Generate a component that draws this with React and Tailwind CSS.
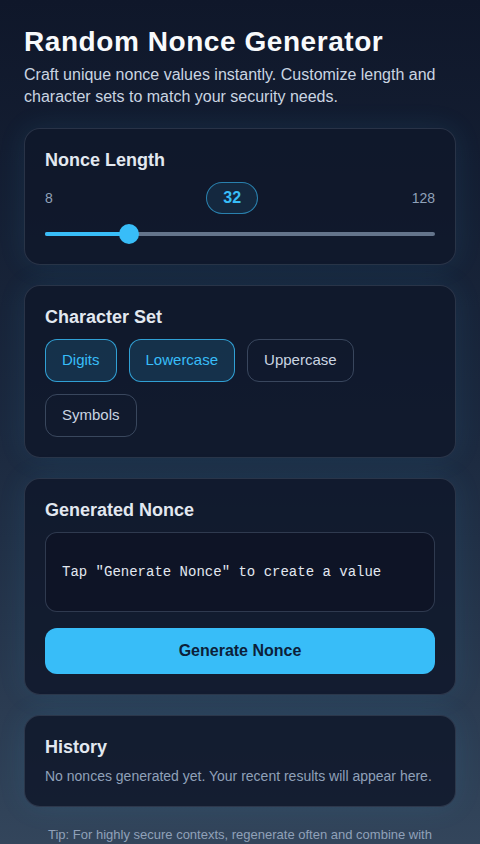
import React, { useState } from "react";

const OPTIONS = ["Digits", "Lowercase", "Uppercase", "Symbols"];

const Card = ({ title, children }) => (
  <section className="rounded-2xl border border-slate-400/20 bg-[#0f172a]/85 p-5 shadow-[0_0_28px_rgba(56,189,248,0.10)]">
    <h2 className="text-[18px] font-bold leading-[22px] text-slate-200">{title}</h2>
    {children}
  </section>
);

export default function App() {
  const [length] = useState(32);
  const [selected, setSelected] = useState(["Digits", "Lowercase"]);
  const pct = (length - 8) / 120;

  const toggle = (name) =>
    setSelected((prev) => (prev.includes(name) ? prev.filter((n) => n !== name) : [...prev, name]));

  return (
    <div
      className="min-h-screen bg-gradient-to-b from-[#0f172a] via-[#1c2a40] to-[#36495f] px-6 pt-[25px] pb-8"
      style={{ fontFamily: '"Liberation Sans", Arial, sans-serif' }}
    >
      <h1 className="text-[28px] font-bold leading-[34px] tracking-[0.02em] text-slate-50">
        Random Nonce Generator
      </h1>
      <p className="mt-[5px] text-base leading-[22px] text-slate-300">
        Craft unique nonce values instantly. Customize length and character sets to match your security needs.
      </p>

      <div className="mt-5 flex flex-col gap-5">
        <Card title="Nonce Length">
          <div className="mt-[11px] flex items-center justify-between">
            <span className="text-sm text-slate-400">8</span>
            <span className="flex h-8 items-center rounded-full border border-[#38bdf8]/60 bg-[#38bdf8]/10 px-4 text-base font-bold text-[#38bdf8]">
              {length}
            </span>
            <span className="text-sm text-slate-400">128</span>
          </div>
          <div className="relative mt-[10px] h-5">
            <div className="absolute left-0 right-0 top-[8px] h-1 rounded-full bg-[#64748b]" />
            <div
              className="absolute left-0 top-[8px] h-1 rounded-full bg-[#38bdf8]"
              style={{ width: `calc(${pct} * (100% - 20px) + 10px)` }}
            />
            <div
              className="absolute top-0 h-5 w-5 rounded-full bg-[#38bdf8]"
              style={{ left: `calc(${pct} * (100% - 20px))` }}
            />
          </div>
        </Card>

        <Card title="Character Set">
          <div className="mt-[11px] flex flex-wrap gap-3">
            {OPTIONS.map((name) => {
              const on = selected.includes(name);
              return (
                <button
                  key={name}
                  onClick={() => toggle(name)}
                  className={
                    on
                      ? "h-[43px] rounded-xl border border-[#38bdf8]/80 bg-[#38bdf8]/15 px-4 text-[15px] text-[#38bdf8]"
                      : "h-[43px] rounded-xl border border-slate-500/50 bg-transparent px-4 text-[15px] text-slate-300"
                  }
                >
                  {name}
                </button>
              );
            })}
          </div>
        </Card>

        <Card title="Generated Nonce">
          <div className="mt-[11px] flex h-20 items-center rounded-xl border border-slate-500/40 bg-[#0e1426] px-4">
            <span
              className="text-sm text-slate-200"
              style={{ fontFamily: '"Liberation Mono", "Courier New", monospace' }}
            >
              Tap "Generate Nonce" to create a value
            </span>
          </div>
          <button className="mt-4 h-[46px] w-full rounded-xl bg-[#38bdf8] text-base font-bold text-[#0c1f3a]">
            Generate Nonce
          </button>
        </Card>

        <Card title="History">
          <p className="mt-2 text-sm leading-5 text-slate-400">
            No nonces generated yet. Your recent results will appear here.
          </p>
        </Card>
      </div>

      <p className="mt-[18px] px-5 text-center text-[13px] leading-5 text-slate-400">
        Tip: For highly secure contexts, regenerate often and combine with server-side validation.
      </p>
    </div>
  );
}
